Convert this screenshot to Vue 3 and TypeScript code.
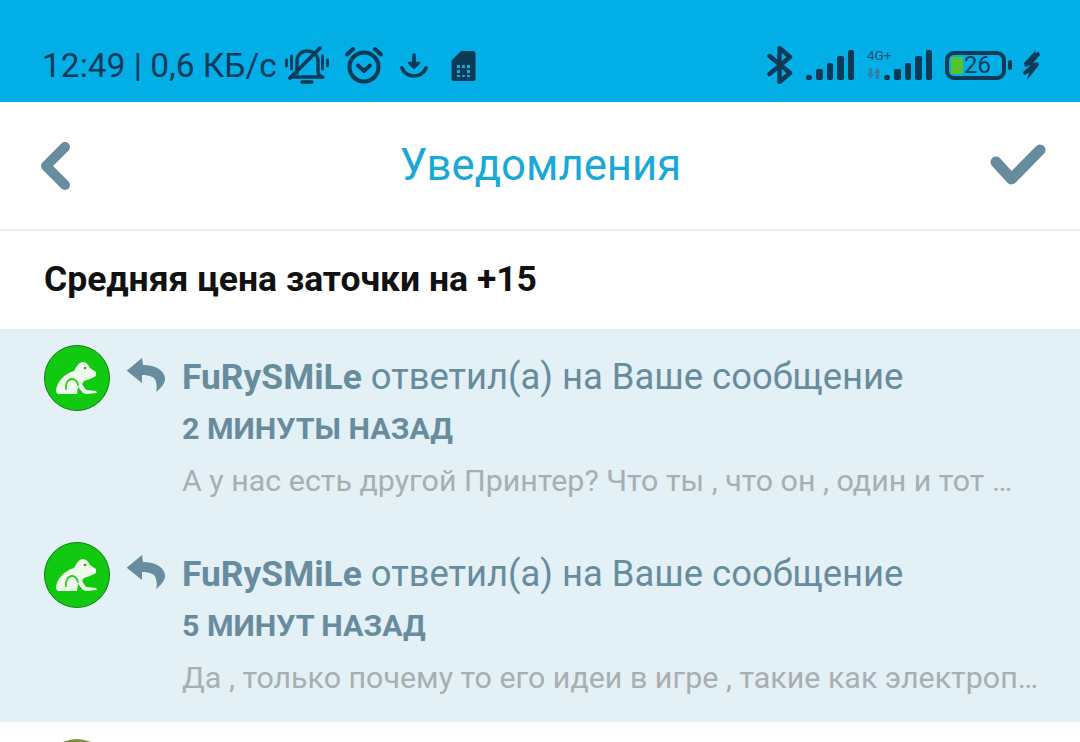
<template>
  <div class="screen">
    <header class="status">
      <div class="status-left">
        <span class="clock">12:49 | 0,6 КБ/с</span>
        <svg class="ic" width="44" height="38" viewBox="0 0 44 38" fill="none" stroke="#0b3a57" stroke-width="3.400" stroke-linecap="round" stroke-linejoin="round">
          <path d="M12 27V15c0-6 5-10 10-10 6 0 11 4 11 10v11c0 2 2 4 5 5H7" />
          <path d="M5 32 35 2" stroke-width="3.800" />
          <path d="M17 36h10" stroke-width="3.400" />
          <path d="M1.500 14v6M6.500 10v13M37.500 10v13M42.500 14v6" stroke-width="2.800" />
        </svg>
        <svg class="ic alarm" width="40" height="38" viewBox="0 0 40 38" fill="none" stroke="#0b3a57" stroke-width="4" stroke-linecap="round" stroke-linejoin="round">
          <circle cx="20" cy="21" r="14.500" />
          <path d="M14 19.500 20 25l6-5.500" />
          <path d="M3 8.500 9 3M37 8.500 31 3" />
        </svg>
        <svg class="ic down" width="28" height="25" viewBox="0 0 28 25" fill="none" stroke="#0b3a57" stroke-width="3.600" stroke-linecap="round" stroke-linejoin="round">
          <path d="M14 2v9" />
          <path d="M9 10h10l-5 5z" fill="#0b3a57" stroke-width="2.400" />
          <path d="M2 15c2 5 7 8 12 8s10-3 12-8" />
        </svg>
        <svg class="ic sim" width="25" height="31" viewBox="0 0 25 31">
          <path d="M10 1h12a2.500 2.500 0 0 1 2.500 2.500v25A2.500 2.500 0 0 1 22 31H3a2.500 2.500 0 0 1-2.500-2.500V10.500z" fill="#0b3a57" />
          <path d="M6 15h3v3H6zM11 15h3v3h-3zM16 15h3v3h-3zM6 20h3v3H6zM16 20h3v3h-3zM6 25h3v2H6zM11 25h3v2h-3zM16 25h3v2h-3z" fill="#02aee6" />
        </svg>
      </div>
      <div class="status-right">
        <svg class="ic bt" width="26" height="38" viewBox="0 0 26 38" fill="none" stroke="#0b3a57" stroke-width="4.400" stroke-linecap="round" stroke-linejoin="round">
          <path d="M2.500 10 23 27 12.500 36V2L23 11 2.500 28" />
        </svg>
        <div class="bars first">
          <i v-for="h in bars" :key="h" :style="{ height: h + 'px' }"></i>
        </div>
        <div class="net">
          <span class="net-label">4G+</span>
          <svg class="arrows" width="16" height="11" viewBox="0 0 16 11" fill="#3d7d9f">
            <path d="M3 0h3v6h2L4.500 11 1 6h2zM10 11h3V5h2L11.500 0 8 5h2z" />
          </svg>
          <div class="bars">
            <i v-for="h in bars" :key="h" :style="{ height: h + 'px' }"></i>
          </div>
        </div>
        <div class="battery">
          <span class="charge"></span>
          <span class="level">26</span>
        </div>
        <span class="nub"></span>
        <svg class="ic bolt" width="18" height="30" viewBox="0 0 18 30" fill="#0b3a57">
          <path d="M14 0 2 13l1 4 6-2-8 7 1 3 5-2-2 7 12-15-1-3-5 1 7-8-1-3-4 1z" />
        </svg>
      </div>
    </header>

    <nav class="bar">
      <svg width="32" height="50" viewBox="0 0 32 50" fill="none" stroke="#678c9d" stroke-width="10" stroke-linecap="round" stroke-linejoin="round">
        <path d="M26 6 7 25l19 19" />
      </svg>
      <h1>Уведомления</h1>
      <svg width="56" height="44" viewBox="0 0 56 44" fill="none" stroke="#678c9d" stroke-width="11" stroke-linecap="round" stroke-linejoin="round">
        <path d="M6 18 21.500 35 50 6" />
      </svg>
    </nav>

    <div class="topic">Средняя цена заточки на +15</div>

    <section class="list">
      <article v-for="item in items" :key="item.time" class="item">
        <div class="avatar">
          <svg width="42" height="33" viewBox="0 0 42 33">
            <path d="M0 30C0 20 8 12 18 9c2-4 5-9 9-9 3 0 5 2 7 6l6 4v4l-6 3-6 2-2 3 4 6 10 1 1 2-11 1-3-1-5-6-1 7H2z" fill="#eefbea" />
            <path d="M10 27c-1-5 2-10 6-10 3 0 5 2 6 6" fill="none" stroke="#2fc92a" stroke-width="1.800" stroke-linecap="round" />
            <circle cx="29" cy="6" r="1.300" fill="#4d8c4a" />
          </svg>
        </div>
        <svg class="reply" width="40" height="35" viewBox="0 0 40 35" fill="#678c9d">
          <path d="M16 0 .7 12.700 16 25v-8c8 0 13 2 14 7 1 4 1 7 0 10 6-5 9-9 9-13C39 13 30 7 17 7z" />
        </svg>
        <div class="body">
          <p class="line"><b>FuRySMiLe</b> ответил(а) на Ваше сообщение</p>
          <p class="when">{{ item.time }}</p>
          <p class="preview">{{ item.text }}</p>
        </div>
      </article>
    </section>

    <div class="next"><span class="next-avatar"></span></div>
  </div>
</template>

<script setup lang="ts">
interface Item {
  time: string;
  text: string;
}

const bars: number[] = [5, 11, 17, 24, 30];

const items: Item[] = [
  { time: "2 МИНУТЫ НАЗАД", text: "А у нас есть другой Принтер? Что ты , что он , один и тот …" },
  { time: "5 МИНУТ НАЗАД", text: "Да , только почему то его идеи в игре , такие как электроп…" },
];
</script>

<style scoped>
.screen {
  width: 1080px;
  height: 742px;
  overflow: hidden;
  background: #fff;
  font-family: Roboto, "Noto Sans", sans-serif;
}

.status {
  height: 102px;
  background: #02aee6;
  color: #0b3a57;
  display: flex;
  justify-content: space-between;
  align-items: center;
  padding: 28px 40px 0 42px;
  box-sizing: border-box;
}

.status-left,
.status-right {
  display: flex;
  align-items: center;
}

.clock {
  font-size: 33.500px;
  white-space: nowrap;
  margin-right: 8px;
}

.alarm {
  margin-left: 15px;
}

.down {
  margin-left: 16px;
}

.sim {
  margin-left: 23px;
}

.bars {
  display: flex;
  align-items: flex-end;
  gap: 4px;
}

.bars i {
  width: 6.400px;
  background: #0b3a57;
  border-radius: 2px;
}

.first {
  margin-left: 13px;
}

.net {
  position: relative;
  width: 66px;
  height: 30px;
  margin-left: 12px;
  display: flex;
  justify-content: flex-end;
  align-items: flex-end;
}

.net-label {
  position: absolute;
  left: 1px;
  top: -3px;
  font-size: 13.500px;
  color: #164f70;
}

.arrows {
  position: absolute;
  left: 0;
  bottom: 1px;
}

.battery {
  position: relative;
  margin-left: 13px;
  border: 4px solid #0b3a57;
  border-radius: 9px;
  display: flex;
  align-items: center;
  width: 53px;
  height: 21px;
}

.charge {
  position: absolute;
  left: 2px;
  top: 2px;
  width: 12px;
  height: 17px;
  background: #57c22e;
}

.level {
  position: relative;
  margin-left: 15px;
  font-size: 24px;
  line-height: 21px;
}

.nub {
  width: 4px;
  height: 10px;
  margin-left: 2px;
  background: #0b3a57;
  border-radius: 2px;
}

.bolt {
  margin-left: 10px;
}

.bar {
  height: 129px;
  display: flex;
  justify-content: space-between;
  align-items: center;
  padding: 0 34px 0 39px;
  box-sizing: border-box;
  border-bottom: 2px solid #e8eef0;
}

.bar h1 {
  margin: 0 0 2px 20px;
  font-size: 43.700px;
  font-weight: 400;
  color: #19a8d8;
}

.topic {
  height: 98px;
  padding: 0 44px 2px;
  box-sizing: border-box;
  display: flex;
  align-items: center;
  font-size: 35.500px;
  font-weight: 700;
  color: #111;
}

.list {
  background: #e3f0f5;
  height: 393px;
}

.item {
  display: flex;
  height: 197px;
  padding: 16px 0 0 44px;
  box-sizing: border-box;
}

.avatar {
  flex: none;
  width: 66px;
  height: 66px;
  box-sizing: border-box;
  border: 1px solid #127a12;
  border-radius: 50%;
  background: #12c912;
  display: flex;
  align-items: center;
  justify-content: center;
}

.reply {
  flex: none;
  margin: 13px 0 0 16px;
}

.body {
  margin-left: 16px;
  padding-top: 11px;
  white-space: nowrap;
}

.body p {
  margin: 0;
}

.line {
  font-size: 36.400px;
  line-height: 42px;
  color: #678c9d;
}

.line b {
  font-size: 35.400px;
}

.body .when {
  margin-top: 14px;
  font-size: 30.400px;
  line-height: 34px;
  font-weight: 700;
  color: #678c9d;
}

.body .preview {
  margin-top: 18px;
  font-size: 30.400px;
  line-height: 34px;
  color: #a8aeb1;
}

.next {
  height: 20px;
  padding-left: 44px;
  overflow: hidden;
}

.next-avatar {
  display: block;
  width: 66px;
  height: 66px;
  margin-top: 17px;
  border-radius: 50%;
  background: linear-gradient(90deg, #2f6d3a, #8a9a3c 60%, #3c6a3a);
}
</style>
